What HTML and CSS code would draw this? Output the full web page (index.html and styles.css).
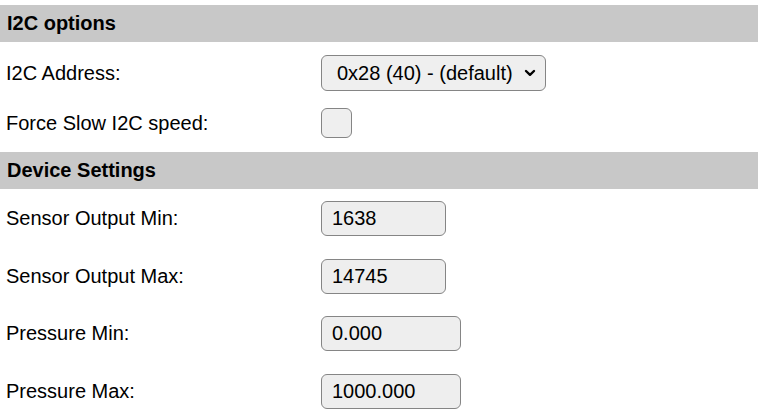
FILE: index.html
```html
<!DOCTYPE html>
<html lang="en">
<head>
<meta charset="utf-8">
<title>Settings</title>
<link rel="stylesheet" href="styles.css">
</head>
<body>
<div class="page">
  <div class="section-head">I2C options</div>
  <div class="row row-select">
    <label class="label" for="addr">I2C Address:</label>
    <div class="select-wrap">
      <select id="addr" class="select">
        <option>0x28 (40) - (default)</option>
      </select>
      <svg class="chevron" width="12" height="8" viewBox="0 0 12 8" aria-hidden="true"><path d="M2 2 L6 5.8 L10 2" fill="none" stroke="#000" stroke-width="2.4" stroke-linecap="round" stroke-linejoin="round"/></svg>
    </div>
  </div>
  <div class="row row-check">
    <label class="label" for="slow">Force Slow I2C speed:</label>
    <input id="slow" class="check" type="checkbox">
  </div>

  <div class="section-head">Device Settings</div>
  <div class="row row-input">
    <label class="label" for="somin">Sensor Output Min:</label>
    <input id="somin" class="field field-short" type="text" value="1638" readonly>
  </div>
  <div class="row row-input">
    <label class="label" for="somax">Sensor Output Max:</label>
    <input id="somax" class="field field-short" type="text" value="14745" readonly>
  </div>
  <div class="row row-input">
    <label class="label" for="pmin">Pressure Min:</label>
    <input id="pmin" class="field field-long" type="text" value="0.000" readonly>
  </div>
  <div class="row row-input">
    <label class="label" for="pmax">Pressure Max:</label>
    <input id="pmax" class="field field-long" type="text" value="1000.000" readonly>
  </div>
</div>
</body>
</html>
```
FILE: styles.css
```css
html, body {
  margin: 0;
  padding: 0;
  background: #fff;
}
body {
  font-family: "Liberation Sans", Arial, sans-serif;
  font-size: 20px;
  color: #000;
}
.page {
  padding-top: 5px;
}
.section-head {
  height: 37px;
  box-sizing: border-box;
  background: #c8c8c8;
  display: flex;
  align-items: center;
  padding-left: 7px;
  font-weight: bold;
  font-size: 20px;
}
.row {
  display: flex;
  align-items: center;
}
.label {
  width: 321px;
  box-sizing: border-box;
  padding-left: 6px;
  flex: none;
}
.row-select {
  padding: 13px 0 9px;
}
.row-check {
  padding: 8px 0 14px;
}
.row-input {
  padding: 12px 0 10.67px;
}
.select-wrap {
  position: relative;
  display: flex;
}
.select {
  appearance: none;
  -webkit-appearance: none;
  width: 225px;
  height: 36px;
  box-sizing: border-box;
  border: 1px solid #858585;
  border-radius: 6px;
  background: #efefef;
  font-family: inherit;
  font-size: 20px;
  color: #000;
  padding: 0 0 0 15px;
  margin: 0;
}
.chevron {
  position: absolute;
  right: 10px;
  top: 14px;
  pointer-events: none;
}
.check {
  appearance: none;
  -webkit-appearance: none;
  width: 31px;
  height: 30px;
  box-sizing: border-box;
  margin: 0;
  border: 1px solid #858585;
  border-radius: 6px;
  background: #efefef;
}
.field {
  height: 35px;
  box-sizing: border-box;
  margin: 0;
  border: 1px solid #858585;
  border-radius: 6px;
  background: #eeeeee;
  font-family: inherit;
  font-size: 20px;
  color: #000;
  padding: 0 0 0 10px;
}
.field-short {
  width: 125px;
}
.field-long {
  width: 140px;
}
```
